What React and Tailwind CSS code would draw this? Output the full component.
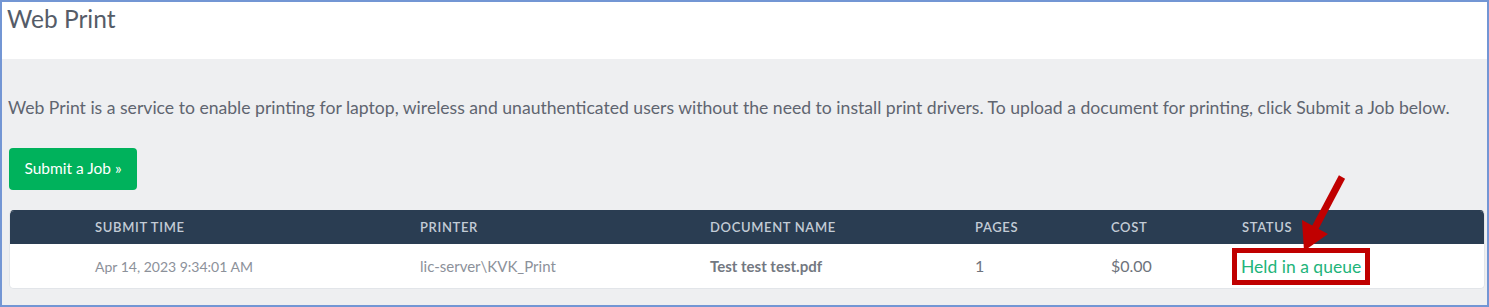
import React from 'react'

const COLS = 'grid grid-cols-[85px_325px_290px_265px_136px_131px_1fr] items-center'

const job = {
  time: 'Apr 14, 2023 9:34:01 AM',
  printer: 'lic-server\\KVK_Print',
  doc: 'Test test test.pdf',
  pages: '1',
  cost: '$0.00',
  status: 'Held in a queue',
}

export default function App() {
  return (
    <div className="relative w-[1489px] h-[307px] overflow-hidden border-2 border-[#7396d4] bg-[#eeeff1] font-['Lato',sans-serif]">
      {/* header */}
      <div className="h-[57px] bg-white px-[5px] pt-[1px]">
        <h1 className="text-[24.5px] text-[#555c68] leading-[32px]">Web Print</h1>
      </div>

      <div className="px-[7px] pr-[2px]">
        <p className="mt-[37px] -ml-[1px] text-[17.6px] leading-[24px] text-[#5f6570] whitespace-nowrap">
          Web Print is a service to enable printing for laptop, wireless and unauthenticated users without the need to install print drivers. To upload a document for printing, click Submit a Job below.
        </p>

        <button className="mt-[28px] w-[128px] h-[42px] rounded-[4px] bg-[#00b25c] text-white text-[15.5px]">
          Submit a Job »
        </button>

        {/* jobs table */}
        <div className="mt-[20px] rounded-[5px] overflow-hidden border border-[#e2e5e9] border-t-[#2a3d52]">
          <div className={`${COLS} h-[33px] bg-[#2a3d52] text-[13px] font-semibold tracking-[0.05em] uppercase text-[#c3ccd6]`}>
            <div />
            <div>Submit Time</div>
            <div>Printer</div>
            <div>Document Name</div>
            <div>Pages</div>
            <div>Cost</div>
            <div>Status</div>
          </div>
          <div className={`${COLS} h-[44px] bg-white`}>
            <div />
            <div className="text-[14px] text-[#8c919a]">{job.time}</div>
            <div className="text-[15px] text-[#8c919a]">{job.printer}</div>
            <div className="text-[15px] font-bold text-[#737881]">{job.doc}</div>
            <div className="text-[16px] text-[#6e737c]">{job.pages}</div>
            <div className="text-[16px] text-[#6e737c]">{job.cost}</div>
            <div>
              <span className="inline-block -ml-[10px] border-[5px] border-[#c00000] px-[4px] py-[2px] text-[17.5px] leading-[23px] text-[#22b47a]">
                {job.status}
              </span>
            </div>
          </div>
        </div>
      </div>

      {/* annotation arrow */}
      <svg className="absolute left-[1290px] top-[170px]" width="60" height="85" viewBox="0 0 60 85">
        <line x1="50" y1="5" x2="23" y2="56" stroke="#c00000" strokeWidth="7" />
        <polygon points="12,79 10,48 36,62" fill="#c00000" />
      </svg>
    </div>
  )
}
